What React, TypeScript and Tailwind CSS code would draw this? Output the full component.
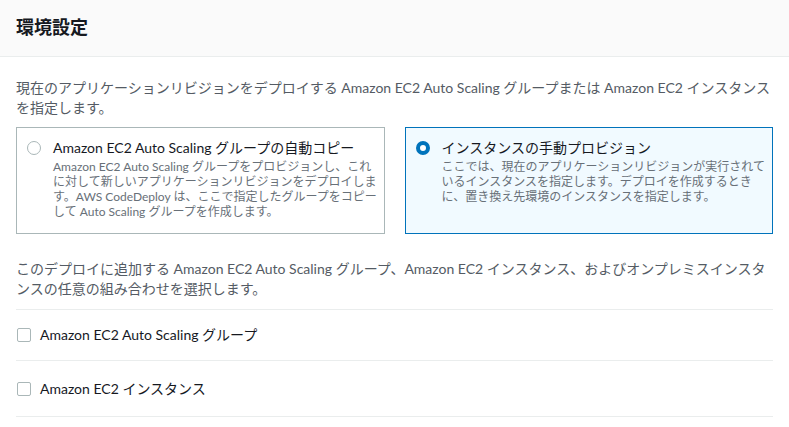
import React from "react";

const font = { fontFamily: 'Lato, "Noto Sans CJK JP", sans-serif' };

export default function App() {
  return (
    <div className="w-[789px] h-[427px] bg-white overflow-hidden" style={font}>
      <div className="h-[57px] bg-[#fafafa] border-b border-[#eaeded] flex items-center px-4 pb-[2px]">
        <h2 className="text-[18px] font-bold text-[#16191f] leading-[24px]">環境設定</h2>
      </div>
      <div className="px-4 pt-[21px]">
        <p className="text-[14px] leading-[20px] text-[#545b64]">
          現在のアプリケーションリビジョンをデプロイする Amazon EC2 Auto Scaling グループまたは Amazon EC2 インスタンスを指定します。
        </p>
        <div className="grid grid-cols-2 gap-[20px] mt-[9px]">
          <div className="border border-[#aab7b8] h-[107px] pl-[10px] pr-[4px] pt-[9px] flex gap-[12px]">
            <div className="w-[14px] h-[14px] rounded-full border border-[#aab7b8] mt-[4px] shrink-0" />
            <div>
              <div className="text-[14px] leading-[22px] text-[#16191f]">Amazon EC2 Auto Scaling グループの自動コピー</div>
              <div className="text-[12px] leading-[15px] text-[#687078]">
                Amazon EC2 Auto Scaling グループをプロビジョンし、これに対して新しいアプリケーションリビジョンをデプロイします。AWS CodeDeploy は、ここで指定したグループをコピーして Auto Scaling グループを作成します。
              </div>
            </div>
          </div>
          <div className="border border-[#0073bb] bg-[#f1faff] h-[107px] pl-[10px] pr-[4px] pt-[9px] flex gap-[12px]">
            <div className="w-[14px] h-[14px] rounded-full border-[4px] border-[#0073bb] bg-white mt-[4px] shrink-0" />
            <div>
              <div className="text-[14px] leading-[22px] text-[#16191f]">インスタンスの手動プロビジョン</div>
              <div className="text-[12px] leading-[15px] text-[#687078]">
                ここでは、現在のアプリケーションリビジョンが実行されているインスタンスを指定します。デプロイを作成するときに、置き換え先環境のインスタンスを指定します。
              </div>
            </div>
          </div>
        </div>
        <p className="text-[14px] leading-[20px] text-[#545b64] mt-[25px]">
          このデプロイに追加する Amazon EC2 Auto Scaling グループ、Amazon EC2 インスタンス、およびオンプレミスインスタンスの任意の組み合わせを選択します。
        </p>
        <div className="mt-[10px] border-t border-[#eaeded]">
          <div className="h-[51px] flex items-center gap-[9px] border-b border-[#eaeded] pb-[1px]">
            <div className="w-[14px] h-[14px] rounded-[2px] border border-[#aab7b8] ml-px" />
            <span className="text-[14px] text-[#16191f]">Amazon EC2 Auto Scaling グループ</span>
          </div>
          <div className="h-[56px] flex items-center gap-[9px] border-b border-[#eaeded]">
            <div className="w-[14px] h-[14px] rounded-[2px] border border-[#aab7b8] ml-px" />
            <span className="text-[14px] text-[#16191f]">Amazon EC2 インスタンス</span>
          </div>
        </div>
      </div>
    </div>
  );
}
